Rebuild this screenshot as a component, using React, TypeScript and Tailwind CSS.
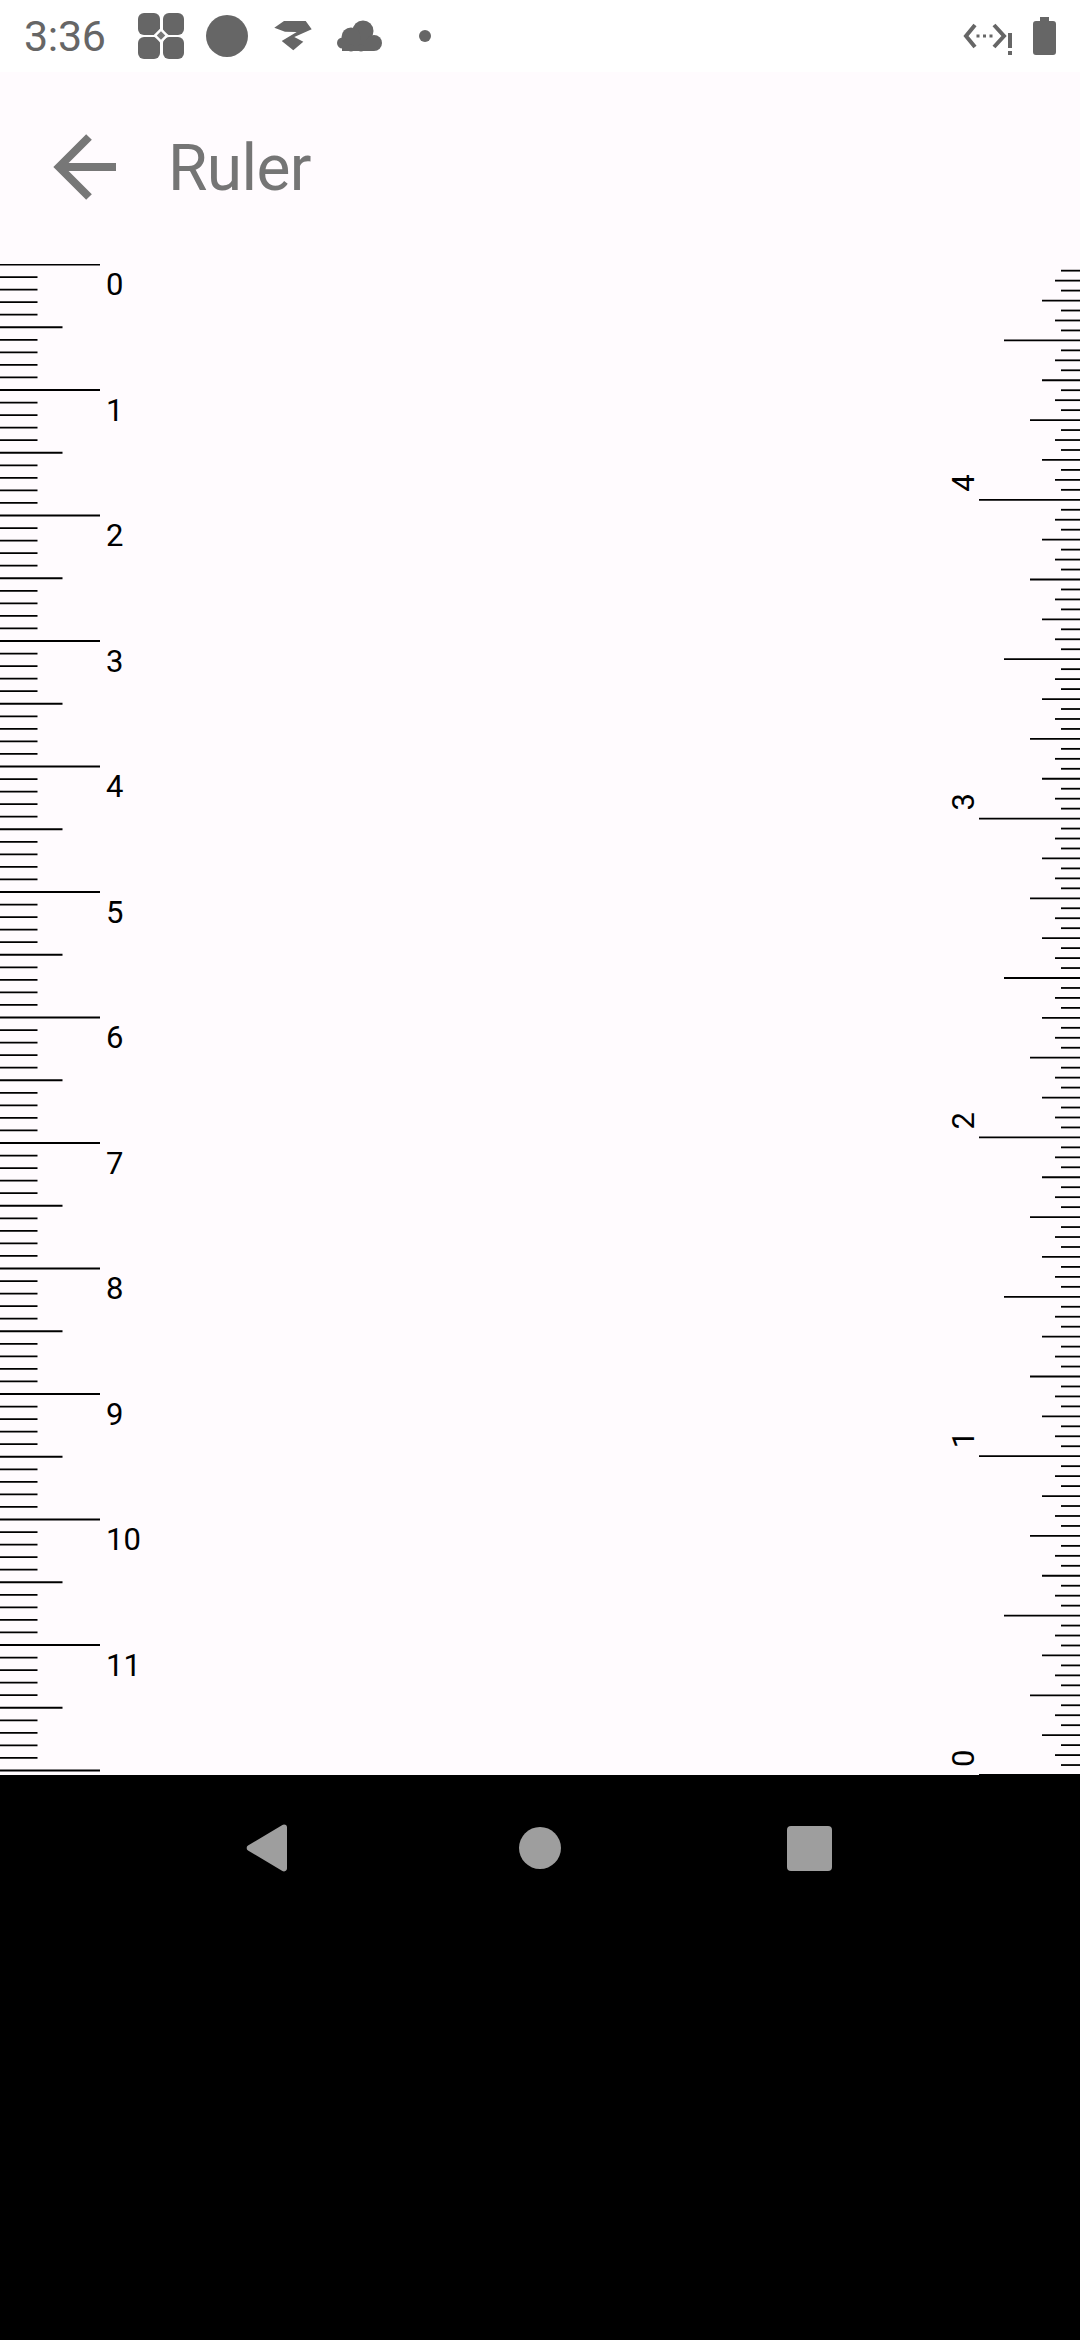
const leftTicks = Array.from({ length: 121 }, (_, i) => i);
const rightTicks = Array.from({ length: 161 }, (_, i) => i);
const cmLabels = Array.from({ length: 12 }, (_, i) => i);
const inLabels = [0, 1, 2, 3, 4];
const CM = 125.5;
const INCH = 318.8;
const rightWidth = (i: number) => {
  if (i % 32 === 0) return 101;
  if (i % 16 === 0) return 76;
  if (i % 8 === 0) return 50;
  if (i % 4 === 0) return 38;
  if (i % 2 === 0) return 25;
  return 19;
};
const leftWidth = (i: number) => (i % 10 === 0 ? 100 : i % 5 === 0 ? 62.5 : 37.5);

function LeftRuler() {
  return (
    <svg width="160" height="1511" viewBox="0 0 160 1511" className="block shrink-0">
      {leftTicks.map((i) => {
        const y = 0.5 + (i * CM) / 10;
        return <line key={i} x1="0" x2={leftWidth(i)} y1={y} y2={y} stroke="#000" strokeWidth="1.8" />;
      })}
      {cmLabels.map((n) => (
        <text key={n} x="106" y={n * CM + 31} fontSize="31" fill="#000">
          {n}
        </text>
      ))}
    </svg>
  );
}

function RightRuler() {
  return (
    <svg width="140" height="1511" viewBox="940 264 140 1511" className="block shrink-0">
      {rightTicks.map((i) => {
        const y = 1775 - (i * INCH) / 32;
        return <line key={i} x1={1080 - rightWidth(i)} x2="1080" y1={y} y2={y} stroke="#000" strokeWidth="1.8" />;
      })}
      {inLabels.map((n) => {
        const y = 1775 - n * INCH - 8;
        return (
          <text key={n} x="974" y={y} fontSize="31" fill="#000" transform={`rotate(-90 974 ${y})`}>
            {n}
          </text>
        );
      })}
    </svg>
  );
}

export default function App() {
  return (
    <div className="flex h-[2340px] w-[1080px] flex-col bg-black font-[family-name:Roboto,sans-serif]">
      <div className="flex h-[72px] shrink-0 items-center justify-between bg-white px-[24px] text-[#666666]">
        <div className="flex items-center">
          <span className="w-[81px] text-[43px] leading-none tracking-[-0.3px]">3:36</span>
          <svg width="46" height="46" viewBox="0 0 46 46" className="ml-[33px] -mt-[1px]">
            <rect x="0" y="0" width="22" height="22" rx="6" fill="#666666" />
            <rect x="25" y="0" width="21" height="22" rx="6" fill="#666666" />
            <rect x="0" y="24" width="22" height="22" rx="6" fill="#666666" />
            <rect x="25" y="24" width="21" height="22" rx="6" fill="#666666" />
            <rect x="17.500" y="17" width="11" height="11" transform="rotate(45 23 22.500)" fill="#ffffff" />
            <rect x="20" y="19.500" width="6" height="6" transform="rotate(45 23 22.500)" fill="#777777" />
          </svg>
          <div className="ml-[22px] h-[42px] w-[42px] rounded-full bg-[#666666]" />
          <svg width="38" height="30" viewBox="0 0 38 30" className="ml-[26px]" fill="#666666">
            <path d="M.3 6.700 10 0h21.700l6 8.300L20.300 16l9 4.700-10 8.600L7.700 20l15-9L11 10.700Z" />
          </svg>
          <svg width="45" height="32" viewBox="0 0 45 32" className="ml-[25px]" fill="#666666">
            <circle cx="26" cy="11" r="10.500" />
            <circle cx="14" cy="17" r="9.500" />
            <circle cx="5.500" cy="23" r="5.500" />
            <circle cx="37" cy="23" r="8" />
            <rect x="5" y="20" width="32" height="11" />
            <circle cx="14" cy="28" r="3.500" />
            <circle cx="24" cy="28" r="3.500" />
          </svg>
          <div className="ml-[37px] h-[12px] w-[12px] rounded-full bg-[#666666]" />
        </div>
        <div className="flex items-center">
          <svg width="50" height="40" viewBox="0 0 50 40" fill="none" stroke="#666666" strokeWidth="4">
            <path d="M12 9 3 20l9 11M31 9l10 11-10 11" />
            <rect x="13.500" y="18.500" width="3" height="3" fill="#666666" stroke="none" />
            <rect x="20" y="18.500" width="3" height="3" fill="#666666" stroke="none" />
            <rect x="26.500" y="18.500" width="3" height="3" fill="#666666" stroke="none" />
            <rect x="45" y="17" width="4" height="15" fill="#666666" stroke="none" />
            <rect x="45" y="35" width="4" height="4" fill="#666666" stroke="none" />
          </svg>
          <svg width="23" height="38" viewBox="0 0 23 38" className="ml-[20px]" fill="#666666">
            <path d="M7 0h9v4h4a3 3 0 0 1 3 3v28a3 3 0 0 1-3 3H3a3 3 0 0 1-3-3V7a3 3 0 0 1 3-3h4Z" />
          </svg>
        </div>
      </div>
      <div className="flex h-[192px] shrink-0 items-center bg-[#fffbfe]">
        <svg width="70" height="70" viewBox="0 0 70 70" className="ml-[50px]" fill="none" stroke="#777777" strokeWidth="8">
          <path d="M39 4 9 34l30 30M9 34h57" />
        </svg>
        <span className="ml-[48px] mt-[2px] text-[64px] leading-none tracking-[-0.6px] text-[#757575]">Ruler</span>
      </div>
      <div className="flex h-[1511px] shrink-0 justify-between overflow-hidden bg-[#fffbfe]">
        <LeftRuler />
        <RightRuler />
      </div>
      <div className="flex h-[146px] shrink-0 items-center bg-black">
        <svg width="42" height="48" viewBox="0 0 42 48" className="ml-[246px]" fill="#9e9e9e">
          <path d="M38 .5a3 3 0 0 1 3 3v41a3 3 0 0 1-4.600 2.500L2 26.500a3 3 0 0 1 0-5L36.400 1a3 3 0 0 1 1.600-.5Z" />
        </svg>
        <div className="ml-[231px] h-[42px] w-[42px] rounded-full bg-[#9e9e9e]" />
        <div className="ml-[226px] h-[45px] w-[45px] rounded-[4px] bg-[#9e9e9e]" />
      </div>
    </div>
  );
}
